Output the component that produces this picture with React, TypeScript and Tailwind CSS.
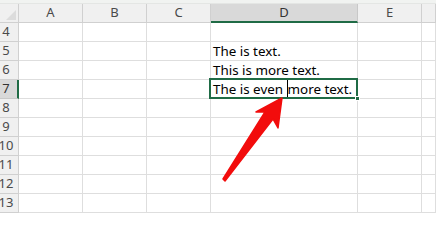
import React from "react";

const cols = ["A", "B", "C", "D", "E", ""];
const rows = [4, 5, 6, 7, 8, 9, 10, 11, 12, 13];
const texts: Record<string, string> = {
  "5": "The is text.",
  "6": "This is more text.",
};

export default function App() {
  return (
    <div className="relative w-[436px] h-[213px] overflow-hidden bg-white" style={{ fontFamily: "'Noto Sans', sans-serif" }}>
      <div className="h-[4px] bg-[#f1f3f1] border-b border-[#e4e6e4]" />
      <div className="grid grid-cols-[19px_64px_64px_64px_147px_64px_1fr] auto-rows-[19px]">
        <div className="relative bg-[#f0f0f0] border-r border-b border-[#d0d0d0]">
          <div className="absolute right-[2px] bottom-[2px] w-0 h-0 border-l-[10px] border-l-transparent border-b-[10px] border-b-[#dcdcdc]" />
        </div>
        {cols.map((c, i) => (
          <div
            key={c + i}
            className={
              c === "D"
                ? "flex items-center justify-center bg-[#d9d9d9] border-r border-[#c8c8c8] border-b-2 border-b-[#1f6b45] text-[13px] text-[#333]"
                : "flex items-center justify-center bg-[#f0f0f0] border-r border-b border-[#d0d0d0] text-[13px] text-[#4a4a4a]"
            }
          >
            {c}
          </div>
        ))}
        {rows.map((r) => (
          <React.Fragment key={r}>
            <div
              className={
                r === 7
                  ? "flex items-center justify-center pr-[5px] bg-[#d9d9d9] border-b border-[#c8c8c8] border-r-2 border-r-[#1f6b45] text-[13px] text-[#333]"
                  : "flex items-center justify-center pr-[6px] bg-[#f0f0f0] border-r border-b border-[#d0d0d0] text-[13px] text-[#4a4a4a]"
              }
            >
              {r}
            </div>
            {cols.map((c, i) => (
              <div key={c + i} className="flex items-end border-r border-b border-[#dedede] pl-[2px] text-[13.4px] leading-[17px] text-black whitespace-nowrap">
                {c === "D" && texts[String(r)]}
                {c === "D" && r === 7 && (
                  <span className="flex items-end whitespace-pre">
                    {"The is even "}
                    <span className="inline-block w-[1px] h-[18px] bg-black" />
                    more text.
                  </span>
                )}
              </div>
            ))}
          </React.Fragment>
        ))}
      </div>
      <div className="absolute left-[209px] top-[78px] w-[149px] h-[21px] border-2 border-[#1f6b45]" />
      <div className="absolute left-[355px] top-[96px] w-[5px] h-[5px] bg-[#1f6b45] border border-white" />
      <svg className="absolute left-0 top-0" width="436" height="213" viewBox="0 0 436 213">
        <polygon
          points="282,98 278,128 273,119 225,181 223,179 265,112 256,112"
          fill="#f20c0c"
          stroke="#f20c0c"
          strokeWidth="1.5"
          strokeLinejoin="round"
        />
      </svg>
    </div>
  );
}
